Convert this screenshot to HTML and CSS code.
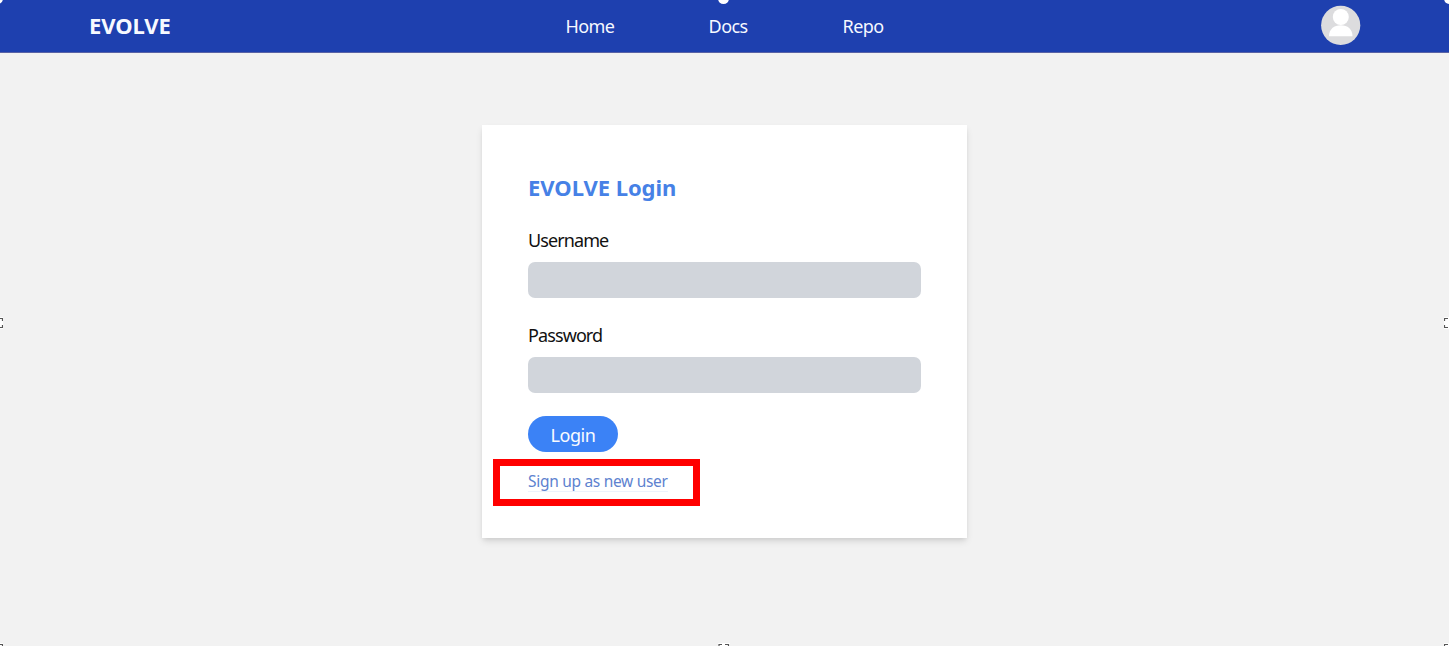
FILE: index.html
```html
<!DOCTYPE html>
<html lang="en">
<head>
<meta charset="utf-8">
<title>EVOLVE Login</title>
<link rel="stylesheet" href="styles.css">
</head>
<body>
<header class="topbar">
  <a class="brand">EVOLVE</a>
  <nav class="nav"><a class="home">Home</a><a class="docs">Docs</a><a class="repo">Repo</a></nav>
  <svg class="avatar" viewBox="0 0 40 40">
    <circle cx="19.7" cy="20.3" r="19.6" fill="#dcdcde"/>
    <circle cx="19.8" cy="12" r="8" fill="#fff"/>
    <path d="M8 31.3C8 24 13 20.2 19.8 20.2S31.5 24 31.5 31.3Z" fill="#fff"/>
  </svg>
</header>
<main class="page">
  <form class="card">
    <h1 class="title">EVOLVE Login</h1>
    <label class="label username" for="username">Username</label>
    <input class="field" id="username" type="text">
    <label class="label password" for="password">Password</label>
    <input class="field" id="password" type="password">
    <button class="login" type="button"><span>Login</span></button>
    <a class="signup">Sign up as new user</a>
    <div class="highlight"></div>
  </form>
</main>
<i class="dot dot-left"></i><i class="dot dot-center"></i><i class="dot dot-right"></i>
<svg class="handle middle-left" viewBox="0 0 3 12"><path d="M0 1.5H2.5V4M2.5 8V10.5H0"/></svg>
<svg class="handle middle-right" viewBox="0 0 5 12"><path d="M4 1.5H.5V4M.5 8V10.5H4"/></svg>
<svg class="handle bottom-center" viewBox="0 0 12 3"><path d="M1 3V1.5H4M7 1.5H10.5V3"/></svg>
<svg class="handle bottom-left" viewBox="0 0 3 3"><path d="M0 1.5H2.5V3"/></svg>
<svg class="handle bottom-right" viewBox="0 0 5 3"><path d="M4 1.5H.5V3"/></svg>
</body>
</html>
```
FILE: styles.css
```css
* { box-sizing: border-box; }
body {
  margin: 0;
  height: 646px;
  position: relative;
  overflow: hidden;
  background: #f2f2f2;
  color: #111;
  font: 18px/26px "Noto Sans", "Open Sans", sans-serif;
}
.topbar {
  display: flex;
  height: 53px;
  padding: 0 88px 0 89px;
  background: #1e40af;
  border-bottom: 1px solid #5963a6;
  color: #f7f9ff;
}
.brand {
  width: 90px;
  padding-top: 12px;
  font-size: 22px;
  font-weight: 700;
  letter-spacing: -0.1px;
}
.nav {
  display: grid;
  grid-template-columns: 143px 134px 60px;
  width: 337px;
  margin-left: 386.6px;
  padding-top: 13px;
  letter-spacing: -0.6px;
}
.avatar { width: 40px; height: 40px; margin-top: 5px; margin-left: auto; }
.page { display: flex; justify-content: center; padding-top: 72px; }
.card {
  position: relative;
  display: flex;
  flex-direction: column;
  width: 485px;
  height: 413px;
  padding: 48px 46px 0;
  background: #fff;
  box-shadow: 0 4px 7px -1px rgba(0, 0, 0, .13), 0 2px 4px -1px rgba(0, 0, 0, .06);
}
.title {
  margin: 0 0 26px;
  color: #4681e6;
  font-size: 22px;
  line-height: 28px;
  font-weight: 700;
  letter-spacing: -0.05px;
}
.label { margin-bottom: 9px; letter-spacing: -0.9px; }
.field {
  width: 393px;
  height: 36px;
  margin: 0 0 24px;
  padding: 6px 10px;
  border: 0;
  border-radius: 7px;
  background: #d1d5db;
  font: inherit;
}
.login {
  width: 90px;
  height: 36px;
  margin-top: -1px;
  padding: 2px 0 0;
  border: 0;
  border-radius: 18px;
  background: #3b82f6;
  color: #f8fbff;
  font: inherit;
  letter-spacing: -0.4px;
}
.signup {
  align-self: flex-start;
  margin-top: 19px;
  border-bottom: 1px solid #edf2fc;
  color: #5e82cf;
  font-size: 15.5px;
  line-height: 20px;
  letter-spacing: -0.3px;
}
.highlight {
  position: absolute;
  left: 11px;
  top: 334px;
  width: 207px;
  height: 47px;
  border: 7px solid #f00;
}
.dot { position: absolute; top: -7px; width: 11px; height: 11px; border-radius: 50%; background: #fff; }
.dot-left { left: -8px; }
.dot-center { left: 718px; }
.dot-right { left: 1444px; }
.handle { position: absolute; fill: none; stroke: #555; stroke-width: 1.2; background: #fff; }
.middle-left { left: 0; top: 317px; width: 3px; height: 12px; }
.middle-right { left: 1444px; top: 317px; width: 5px; height: 12px; }
.bottom-center { left: 718px; top: 643px; width: 12px; height: 3px; }
.bottom-left { left: 0; top: 643px; width: 3px; height: 3px; }
.bottom-right { left: 1444px; top: 643px; width: 5px; height: 3px; }
```
